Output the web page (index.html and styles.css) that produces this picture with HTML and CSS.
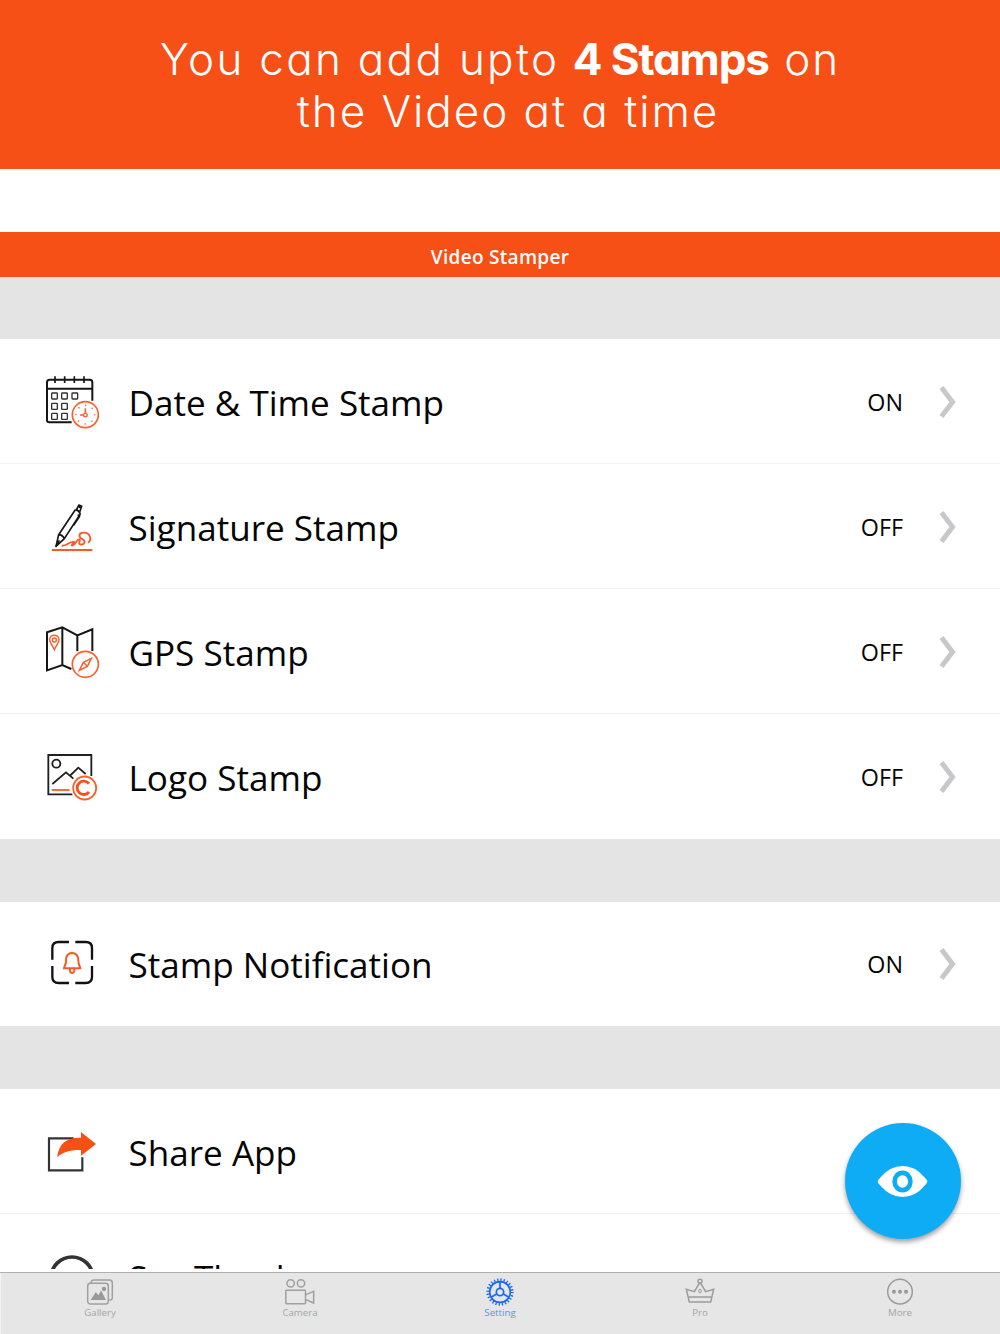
FILE: index.html
```html
<!DOCTYPE html>
<html lang="en">
<head>
<meta charset="utf-8">
<title>Video Stamper</title>
<link rel="stylesheet" href="styles.css">
</head>
<body>
<div class="page">
  <header class="promo">
    <div class="promo-line"><span class="lead">You can add upto</span> <b>4 Stamps</b> <span class="tail">on</span></div>
    <div class="promo-line second">the Video at a time</div>
  </header>
  <div class="title-bar">Video Stamper</div>
  <main class="settings">
    <section class="group">
      <div class="row">
        <svg class="icon" viewBox="0 -63 270 375" fill="none" stroke="#151515" stroke-width="6">
          <path d="M125 187H58q-7 0-7-7V67q0-8 8-8H179q8 0 8 8V122M51 86H187"/>
          <path d="M75 49V69M104 49V69M133 49V69M162 49V69" stroke-width="5"/>
          <g stroke-width="4" stroke="#333"><rect x="65" y="99" width="17" height="18" rx="2"/><rect x="95" y="99" width="17" height="18" rx="2"/><rect x="126" y="99" width="17" height="18" rx="2"/><rect x="65" y="130" width="17" height="18" rx="2"/><rect x="95" y="130" width="17" height="18" rx="2"/><rect x="65" y="160" width="17" height="18" rx="2"/><rect x="95" y="160" width="17" height="18" rx="2"/></g>
          <g stroke="#f8602f"><circle cx="166" cy="164" r="39" stroke-width="5"/><circle cx="166" cy="165" r="5.5" stroke-width="4"/><path d="M166 145V159M150 165H160" stroke-width="4.500"/><circle cx="166" cy="164" r="28" stroke-width="4.500" stroke-linecap="round" stroke-dasharray="0.1 21.89"/></g>
        </svg>
        <span class="label">Date &amp; Time Stamp</span><span class="state">ON</span>
        <svg class="chevron" viewBox="0 0 18 34"><path d="M2.5 2.5L13.5 17L2.5 31.5"/></svg>
      </div>
      <div class="row">
        <svg class="icon" viewBox="0 -78 270 375" fill="none" stroke="#151515" stroke-width="5" stroke-linejoin="round">
          <path d="M136 59L86 134L78 169L103 146L151 72M86 134Q97 134 103 146M136 59Q147 61 151 72M139 60L147 45L155 49L149 66M145 49L153 54"/>
          <path d="M143 74L149 79L131 106" stroke-width="4.500"/><path d="M88 151L78 169"/>
          <g stroke="#f7592b"><path d="M66 180H187" stroke-width="5.5"/><path d="M95 167C108 169 117 156 130 155C139 155 119 168 127 167C138 165 140 145 148 149C154 153 142 160 151 163C164 166 168 154 158 148C143 141 147 128 160 128C179 127 188 148 174 158" stroke-width="5.5"/></g>
        </svg>
        <span class="label">Signature Stamp</span><span class="state">OFF</span>
        <svg class="chevron" viewBox="0 0 18 34"><path d="M2.5 2.5L13.5 17L2.5 31.5"/></svg>
      </div>
      <div class="row">
        <svg class="icon" viewBox="0 -63 270 375" fill="none" stroke="#151515" stroke-width="6">
          <path d="M124 177L97 165L51 181V67L97 52L142 76L187 58V123M97 52V165M142 76V124"/>
          <g stroke="#f8602f" stroke-width="4.500"><path d="M73 119C67 106 59 98 59 89C59 71 87 71 87 89C87 98 79 106 73 119Z"/><circle cx="73" cy="90" r="6"/><circle cx="166" cy="163" r="39" stroke-width="5"/><path d="M184 145L172 169L148 181L160 157ZM160 157L172 169"/></g>
        </svg>
        <span class="label">GPS Stamp</span><span class="state">OFF</span>
        <svg class="chevron" viewBox="0 0 18 34"><path d="M2.5 2.5L13.5 17L2.5 31.5"/></svg>
      </div>
      <div class="row last">
        <svg class="icon" viewBox="0 -78 270 375" fill="none" stroke="#202020" stroke-width="5.500">
          <path d="M127 163H55V45H184V108M67 132L108 97L130 116M119 108L145 83L167 102"/><circle cx="79" cy="71" r="12"/>
          <g stroke="#f8602f"><path d="M65 150H119"/><circle cx="164" cy="144" r="34.5"/><path d="M177 131A20 20 0 1 0 177 156" stroke="#f55018" stroke-width="8.500"/></g>
        </svg>
        <span class="label">Logo Stamp</span><span class="state">OFF</span>
        <svg class="chevron" viewBox="0 0 18 34"><path d="M2.5 2.5L13.5 17L2.5 31.5"/></svg>
      </div>
    </section>
    <section class="group">
      <div class="row last">
        <svg class="icon" viewBox="0 -69 270 375" fill="none" stroke="#111" stroke-width="7">
          <path d="M117 51H86Q67 51 67 69V104M136 51H167Q186 51 186 69V104M67 123V156Q67 174 86 174H117M186 123V156Q186 174 167 174H136"/>
          <g stroke="#f75a27" stroke-width="6"><path d="M126 84C112 84 108 95 108 107C108 120 103 123 102 130H151C150 123 145 120 145 107C145 95 141 84 126 84Z"/><path d="M120 132V137Q121 144 126 144T133 137V132"/><path d="M126 80V86"/></g>
        </svg>
        <span class="label">Stamp Notification</span><span class="state">ON</span>
        <svg class="chevron" viewBox="0 0 18 34"><path d="M2.5 2.5L13.5 17L2.5 31.5"/></svg>
      </div>
    </section>
    <section class="group">
      <div class="row">
        <svg class="icon" viewBox="0 -78 270 375" fill="none">
          <path d="M131 70H57V166H157V127" stroke="#333" stroke-width="6.500"/><path d="M81 127C87 86 108 67 153 68V51L198 87L153 122V105C122 104 100 110 81 127Z" fill="#f75015"/>
        </svg>
        <span class="label">Share App</span>
      </div>
      <div class="row">
        <svg class="icon" viewBox="0 0 90 125" fill="none" stroke="#333" stroke-width="3.7"><circle cx="42" cy="64" r="21"/></svg>
        <span class="label">Say Thanks</span>
      </div>
    </section>
  </main>
  <nav class="tabs">
    <div class="tab">
      <svg viewBox="0 0 90 90" fill="none" stroke="#a0a0a0" stroke-width="4.500"><path d="M18 18Q18 9 27 9H73Q82 9 82 18V62Q82 69 73 69"/><rect x="8" y="19" width="62" height="62" rx="8" fill="#e6e6e6"/><path d="M17 69L32 46L41 55L48 40L63 69Z" fill="#999" stroke="none"/><circle cx="57" cy="36" r="6.5" fill="#999" stroke="none"/></svg>
      <span>Gallery</span>
    </div>
    <div class="tab">
      <svg viewBox="0 0 90 90" fill="none" stroke="#a0a0a0" stroke-width="4.500"><circle cx="17" cy="19" r="11"/><circle cx="48" cy="19" r="11"/><rect x="2.500" y="40" width="59" height="40" rx="2"/><path d="M63 53L86 43V78L63 68"/></svg>
      <span>Camera</span>
    </div>
    <div class="tab active">
      <svg viewBox="0 0 90 90" fill="none" stroke="#1767f2" stroke-width="5"><circle cx="45" cy="45" r="31"/><circle cx="45" cy="45" r="37" stroke-width="8" stroke-dasharray="3.8 5.885"/><circle cx="45" cy="45" r="11"/><path d="M45 14V34M35 51L18 61M55 51L72 61"/></svg>
      <span>Setting</span>
    </div>
    <div class="tab">
      <svg viewBox="0 0 90 90" fill="none" stroke="#9c9c9c" stroke-width="4.500"><circle cx="45" cy="13" r="6"/><path d="M13 75L4 37L28 44L43 19H47L62 44L86 37L77 75ZM12 60H78"/><ellipse cx="45" cy="42" rx="4" ry="5.5" stroke-width="3"/></svg>
      <span>Pro</span>
    </div>
    <div class="tab">
      <svg viewBox="0 0 90 90" fill="none" stroke="#9b9b9b" stroke-width="4.500"><circle cx="45" cy="44" r="37"/><g fill="#999" stroke="none"><circle cx="27" cy="44" r="6"/><circle cx="45" cy="44" r="6"/><circle cx="63" cy="44" r="6"/></g></svg>
      <span>More</span>
    </div>
  </nav>
  <div class="preview-button">
    <svg viewBox="0 0 153 100"><path d="M1 50Q2 45 10 37Q39 3 77 3T143 37Q151 45 152 50Q151 55 143 63Q115 97 77 97T10 63Q2 55 1 50Z" fill="#fff"/><ellipse cx="76.500" cy="50" rx="24" ry="26" fill="#fff" stroke="#0facf6" stroke-width="14"/></svg>
  </div>
</div>
</body>
</html>
```
FILE: styles.css
```css
* { box-sizing: border-box; }
body { margin: 0; background: #fff; font-family: "Open Sans", sans-serif; color: #050505; }
.page { position: relative; width: 1000px; height: 1334px; overflow: hidden; display: flex; flex-direction: column; }
.promo { height: 169px; padding-top: 33px; flex: none; background: #f75017; color: #fff; text-align: center; font: 300 44px/52px "Century Gothic", Inter, sans-serif; font-feature-settings: "cv11"; }
.promo-line { white-space: nowrap; letter-spacing: 1px; }
.promo .lead { letter-spacing: 2.3px; }
.promo .tail { letter-spacing: 2px; }
.promo .second { letter-spacing: 1.95px; padding-left: 16px; }
.promo b { font-weight: 700; letter-spacing: -1.1px; margin: 0 2px 0 0; }
.title-bar { flex: none; height: 45px; margin-top: 63px; background: #f75017; color: #fff; text-align: center; font-size: 19px; font-weight: 600; line-height: 50px; letter-spacing: .3px; }
.settings { flex: none; height: 992px; background: #e4e4e4; overflow: hidden; }
.group { margin-top: 62px; background: #fff; }
.group + .group { margin-top: 63px; }
.row { height: 125px; display: flex; align-items: center; padding: 0 43px 0 30px; border-bottom: 1px solid #f2f2f2; }
.row.last { border-bottom-color: #fff; }
.group:nth-child(2) .row { height: 124px; }
.icon { width: 90px; height: 125px; flex: none; align-self: flex-start; margin-left: -.5px; }
.label { margin-left: 9px; font-size: 35.1px; line-height: 50px; padding-top: 2px; flex: 1; white-space: nowrap; }
.group:nth-child(2) .label { padding-top: 1px; }
.state { font-size: 23.3px; line-height: 34px; padding-top: 1px; }
.chevron { width: 18px; height: 34px; margin-left: 36px; margin-top: 1px; fill: none; stroke: #c7c7cc; stroke-width: 5; }
.tabs { flex: none; height: 62px; margin-top: 3px; border-top: 1px solid #b0b0b0; box-shadow: inset 1px 0 #f4f4f4; background: #e6e6e6; display: grid; grid-template-columns: repeat(5, 1fr); }
.tab { display: flex; flex-direction: column; align-items: center; padding-top: 4px; font-size: 9.7px; line-height: 12px; color: #a5a5a5; }
.tab svg { width: 30px; height: 30px; }
.active { color: #5b91f3; }
.preview-button { position: absolute; left: 844.5px; top: 1123px; width: 116px; height: 116px; border-radius: 50%; background: #0facf6; display: flex; align-items: center; justify-content: center; box-shadow: 0 3px 5px rgba(0,0,0,.38); }
.preview-button svg { width: 51px; height: 33px; }
```
